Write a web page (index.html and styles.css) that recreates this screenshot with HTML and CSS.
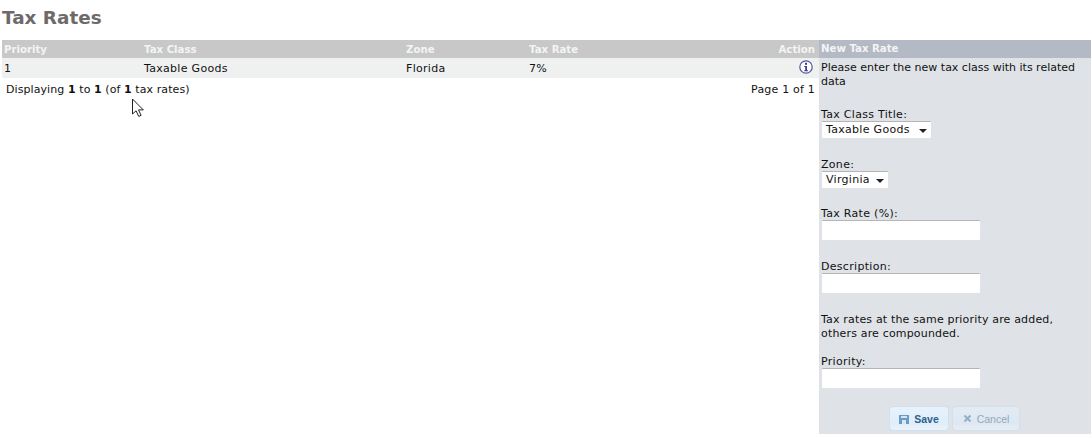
FILE: index.html
```html
<!DOCTYPE html>
<html lang="en">
<head>
<meta charset="utf-8">
<title>Tax Rates</title>
<link rel="stylesheet" href="styles.css">
</head>
<body>
<h1 class="title">Tax Rates</h1>
<div class="layout">
  <main class="list">
    <div class="grid head">
      <span>Priority</span><span>Tax Class</span><span>Zone</span><span>Tax Rate</span><span class="end">Action</span>
    </div>
    <div class="grid row">
      <span>1</span><span>Taxable Goods</span><span>Florida</span><span>7%</span>
      <span class="end"><svg class="info" width="14" height="14" viewBox="0 0 14 14"><circle cx="7" cy="7" r="6.2" fill="#fff" stroke="#55559f" stroke-width="1.2"/><path d="M5.2 6h2.8v4.2h1V11.200H5.200v-1h1V7H5.200z" fill="#3b3b8f"/><rect x="6" y="2.800" width="2" height="2" fill="#3b3b8f"/></svg></span>
    </div>
    <div class="pager">
      <span class="count">Displaying <b>1</b> to <b>1</b> (of <b>1</b> tax rates)</span>
      <span>Page 1 of 1</span>
    </div>
    <svg class="cursor" width="14" height="20" viewBox="0 0 14 20"><path d="M1.5 1v15l3.600-3.200 2.600 5.600 2.400-1.100-2.600-5.400h4.800z" fill="#fff" stroke="#222" stroke-width="1"/></svg>
  </main>
  <aside class="panel">
    <div class="panel-head">New Tax Rate</div>
    <div class="panel-body">
      <p class="intro">Please enter the new tax class with its related data</p>
      <label class="lbl lbl-class">Tax Class Title:</label>
      <div class="select sel-class">Taxable Goods<i class="caret"></i></div>
      <label class="lbl lbl-zone">Zone:</label>
      <div class="select sel-zone">Virginia<i class="caret"></i></div>
      <label class="lbl lbl-rate">Tax Rate (%):</label>
      <div class="field"></div>
      <label class="lbl lbl-desc">Description:</label>
      <div class="field"></div>
      <p class="note">Tax rates at the same priority are added, others are compounded.</p>
      <label class="lbl lbl-prio">Priority:</label>
      <div class="field"></div>
      <div class="actions">
        <button class="btn save"><svg width="10" height="10" viewBox="0 0 10 10"><path d="M0 1h10v9H0z" fill="#6b9cc8"/><path d="M2 2h6v2H2zM3 6h4v4H3z" fill="#d5e6f5"/></svg>Save</button>
        <button class="btn cancel"><svg width="9" height="9" viewBox="0 0 9 9"><path d="M1.500 1.500l6 6M7.500 1.500l-6 6" stroke="#8fb0cc" stroke-width="2"/></svg>Cancel</button>
      </div>
    </div>
  </aside>
</div>
</body>
</html>
```
FILE: styles.css
```css
html, body { margin: 0; padding: 0; background: #fff; }
body { font-family: "DejaVu Sans", Verdana, sans-serif; font-size: 11px; color: #111; width: 1092px; height: 438px; overflow: hidden; }
.title { margin: 0; padding: 7px 0 0 2px; height: 40px; box-sizing: border-box; font-size: 18.4px; line-height: 22px; font-weight: bold; color: #6e6a6a; }
.layout { display: flex; padding-left: 2px; }
.list { width: 817px; position: relative; }
.grid { display: grid; grid-template-columns: 140px 262px 123px 1fr 80px; align-items: center; padding: 0 4px 0 2px; }
.head { height: 18px; background: #c8c8c8; color: #f4f4f4; font-weight: bold; font-size: 10.2px; }
.row { height: 20px; background: #eff1f1; letter-spacing: 0.3px; }
.end { text-align: right; }
.info { display: block; margin: -2px 2px 0 auto; }
.pager { display: flex; justify-content: space-between; padding: 5px 4px 0 4px; line-height: 13px; letter-spacing: 0.2px; }
.count { letter-spacing: 0.08px; }
.cursor { position: absolute; left: 129px; top: 58px; }
.panel { width: 272px; height: 394px; background: #dfe3e7; }
.panel-head { height: 18px; line-height: 18px; padding-left: 2px; background: #b3b9c5; color: #f4f4f4; font-weight: bold; font-size: 10.2px; }
.panel-body { padding: 3px 2px 0; display: flex; flex-direction: column; align-items: flex-start; line-height: 14px; letter-spacing: 0.3px; }
.intro, .note { margin: 0; width: 262px; }
.intro { letter-spacing: 0; }
.lbl { display: block; line-height: 13px; }
.lbl-class { margin-top: 19px; }
.lbl-zone { margin-top: 20px; }
.lbl-rate { margin-top: 19px; }
.lbl-desc { margin-top: 20px; }
.note { margin-top: 20px; letter-spacing: 0.17px; }
.lbl-prio { margin-top: 14px; }
.select { background: #fff; height: 16px; line-height: 16px; padding-left: 4px; margin-left: 1px; display: flex; align-items: center; border-top: 1px solid #b5b5b5; position: relative; border-radius: 1px; }
.sel-class { width: 105px; }
.sel-zone { width: 62px; }
.caret { position: absolute; right: 4px; top: 7px; width: 0; height: 0; border: 4px solid transparent; border-top-color: #222; border-bottom: 0; }
.field { width: 158px; height: 19px; margin-left: 1px; background: #fff; border-top: 1px solid #b5b5b5; border-radius: 1px; }
.actions { align-self: stretch; display: flex; justify-content: center; gap: 3px; margin-top: 18px; padding-right: 1px; }
.btn { height: 25px; width: 60px; box-sizing: border-box; padding: 0; display: flex; align-items: center; justify-content: center; gap: 5px; border: 1px solid #cfe0ee; border-radius: 4px; font: bold 10.5px "Liberation Sans", Arial, sans-serif; letter-spacing: 0; }
.save { background: linear-gradient(#e8f2fb, #dfeefb 70%, #eaf3fb); color: #2e5f8c; }
.cancel { width: 68px; background: linear-gradient(#e3eaf2, #dfe8f2 70%, #e6edf4); color: #8fa9c0; font-weight: normal; }
```
